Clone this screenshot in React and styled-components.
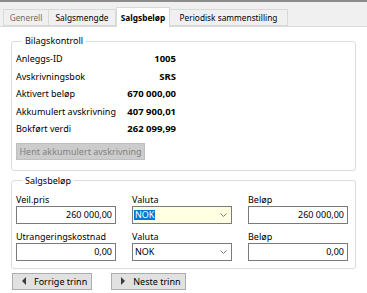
import React from 'react'
import styled, { createGlobalStyle } from 'styled-components'

const Global = createGlobalStyle`
  html, body {
    margin: 0;
    padding: 0;
    background: #ffffff;
  }
  body {
    font-family: 'Noto Sans', 'Open Sans', sans-serif;
    font-size: 9px;
    color: #000;
  }
`

const Window = styled.div`
  width: 367px;
  height: 293px;
  overflow: hidden;
  background: #fff;
  display: flex;
  flex-direction: column;
`

const TabStrip = styled.div`
  height: 24px;
  border-top: 2px solid #8c8c8c;
  background: #f0f0f0;
  border-bottom: 1px solid #dadada;
  display: flex;
  align-items: flex-end;
  padding-left: 3px;
  box-sizing: content-box;
`

const Tab = styled.div`
  width: ${p => p.$w}px;
  height: ${p => (p.$active ? '20px' : '17px')};
  line-height: ${p => (p.$active ? '19px' : '16px')};
  margin-bottom: ${p => (p.$active ? '-1px' : '0')};
  box-sizing: border-box;
  border: 1px solid #d9d9d9;
  border-left: ${p => (p.$first || p.$active ? '1px solid #d9d9d9' : 'none')};
  border-bottom: ${p => (p.$active ? 'none' : '1px solid #d9d9d9')};
  background: ${p => (p.$active ? '#ffffff' : '#f0f0f0')};
  color: ${p => (p.$muted ? '#6d6d6d' : '#000')};
  font-size: 8.3px;
  font-weight: ${p => (p.$active ? 700 : 400)};
  text-align: center;
  white-space: nowrap;
`

const Panel = styled.div`
  flex: 1;
  padding: 7px 11px 0 11px;
  display: flex;
  flex-direction: column;
`

const Group = styled.fieldset`
  margin: 0;
  padding: 2px 4px ${p => p.$bottom || '10px'} 4px;
  border: 1px solid #dcdcdc;
  border-radius: 3px;
  min-width: 0;
  & + & {
    margin-top: 3px;
  }
`

const Legend = styled.legend`
  margin-left: 6px;
  padding: 0 3px;
  line-height: 14px;
`

const Facts = styled.div`
  display: grid;
  width: 160px;
  grid-template-columns: 1fr auto;
`

const FactLabel = styled.div`
  line-height: 17.6px;
  white-space: nowrap;
`

const FactValue = styled.div`
  line-height: 17.6px;
  font-size: 9.5px;
  font-weight: 700;
  text-align: right;
  white-space: nowrap;
`

const DisabledButton = styled.div`
  margin-top: 5px;
  width: 129px;
  height: 17px;
  box-sizing: border-box;
  background: #cccccc;
  border: 1px solid #bfbfbf;
  color: #838383;
  line-height: 15px;
  text-align: center;
  white-space: nowrap;
  overflow: hidden;
`

const FieldGrid = styled.div`
  display: grid;
  grid-template-columns: 100px 100px 100px;
  column-gap: 16px;
  row-gap: 7px;
  padding-top: 4px;
`

const Field = styled.div`
  display: flex;
  flex-direction: column;
`

const FieldLabel = styled.div`
  line-height: 12px;
  white-space: nowrap;
`

const Box = styled.div`
  height: 18px;
  box-sizing: border-box;
  border: 1px solid #7a7a7a;
  background: ${p => (p.$focused ? '#ffffe1' : '#ffffff')};
  display: flex;
  align-items: center;
  justify-content: ${p => (p.$right ? 'flex-end' : 'space-between')};
  padding: 0 ${p => (p.$right ? '3px' : '4px')} 0 1px;
  line-height: 10px;
`

const Selected = styled.span`
  background: #0078d7;
  color: #fff;
  padding: 0 1px;
`

const Plain = styled.span`
  padding: 0 1px;
`

const Chevron = () => (
  <svg width="7" height="4" viewBox="0 0 7 4">
    <path d="M0.5 0.5 L3.5 3.5 L6.5 0.5" fill="none" stroke="#7a7a7a" strokeWidth="1" />
  </svg>
)

const NavRow = styled.div`
  display: flex;
  gap: 19px;
  margin-top: 4px;
  padding-left: 1px;
`

const NavButton = styled.div`
  height: 17px;
  box-sizing: border-box;
  border: 1px solid #adadad;
  background: #e1e1e1;
  display: flex;
  align-items: center;
  gap: 8px;
  padding: 0 4px 0 9px;
  white-space: nowrap;
  line-height: 15px;
`

const Arrow = ({ dir }) => (
  <svg width="4" height="8" viewBox="0 0 4 8">
    {dir === 'left'
      ? <path d="M4 0 L0 4 L4 8 Z" fill="#3c3c3c" />
      : <path d="M0 0 L4 4 L0 8 Z" fill="#3c3c3c" />}
  </svg>
)

const facts = [
  ['Anleggs-ID', '1005'],
  ['Avskrivningsbok', 'SRS'],
  ['Aktivert beløp', '670 000,00'],
  ['Akkumulert avskrivning', '407 900,01'],
  ['Bokført verdi', '262 099,99'],
]

const App = () => {
  return (
    <Window>
      <Global />
      <TabStrip>
        <Tab $first $muted $w={46}>Generell</Tab>
        <Tab $w={67}>Salgsmengde</Tab>
        <Tab $active $w={54}>Salgsbeløp</Tab>
        <Tab $w={118}>Periodisk sammenstilling</Tab>
      </TabStrip>
      <Panel>
        <Group>
          <Legend>Bilagskontroll</Legend>
          <Facts>
            {facts.map(([label, value]) => (
              <React.Fragment key={label}>
                <FactLabel>{label}</FactLabel>
                <FactValue>{value}</FactValue>
              </React.Fragment>
            ))}
          </Facts>
          <DisabledButton>Hent akkumulert avskrivning</DisabledButton>
        </Group>
        <Group $bottom="7px">
          <Legend>Salgsbeløp</Legend>
          <FieldGrid>
            <Field>
              <FieldLabel>Veil.pris</FieldLabel>
              <Box $right>260 000,00</Box>
            </Field>
            <Field>
              <FieldLabel>Valuta</FieldLabel>
              <Box $focused><Selected>NOK</Selected><Chevron /></Box>
            </Field>
            <Field>
              <FieldLabel>Beløp</FieldLabel>
              <Box $right>260 000,00</Box>
            </Field>
            <Field>
              <FieldLabel>Utrangeringskostnad</FieldLabel>
              <Box $right>0,00</Box>
            </Field>
            <Field>
              <FieldLabel>Valuta</FieldLabel>
              <Box><Plain>NOK</Plain><Chevron /></Box>
            </Field>
            <Field>
              <FieldLabel>Beløp</FieldLabel>
              <Box $right>0,00</Box>
            </Field>
          </FieldGrid>
        </Group>
        <NavRow>
          <NavButton><Arrow dir="left" />Forrige trinn</NavButton>
          <NavButton><Arrow dir="right" />Neste trinn</NavButton>
        </NavRow>
      </Panel>
    </Window>
  )
}

export default App
